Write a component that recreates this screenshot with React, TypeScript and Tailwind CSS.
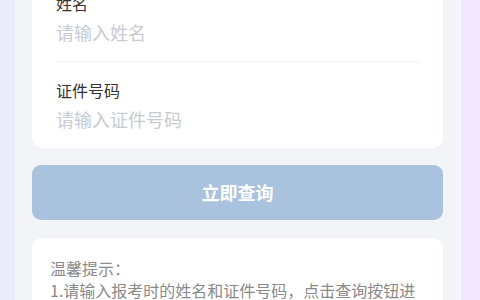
export default function App() {
  const font = { fontFamily: '"Noto Sans CJK SC", "Noto Sans", sans-serif' };

  return (
    <div
      className="h-[300px] w-[480px] overflow-hidden bg-gradient-to-r from-[#e9edfb] via-[#eef0fb] to-[#f1e6fc]"
      style={font}
    >
      <div className="ml-[15px] flex h-full w-[446px] flex-col bg-[#f3f4f7] px-[17px] border-r border-[#f8f7fc]">
        <div className="mt-[-25px] shrink-0 rounded-[10px] bg-white px-6">
          <div className="pt-4 pb-[14px] border-b border-[#f1f2f4]">
            <div className="h-6 text-[16px] leading-6 text-[#333]">姓名</div>
            <div className="mt-[2px] h-[30px] text-[18px] leading-[30px] text-[#c8cbd0]">
              请输入姓名
            </div>
          </div>
          <div className="pt-4 pb-[14px]">
            <div className="h-6 text-[16px] leading-6 text-[#333]">证件号码</div>
            <div className="mt-[2px] h-[30px] text-[18px] leading-[30px] text-[#c8cbd0]">
              请输入证件号码
            </div>
          </div>
        </div>

        <button className="mt-[17px] flex h-[55px] w-full shrink-0 items-center justify-center rounded-[9px] bg-[#a9c2dd] text-[18px] font-bold text-white">
          立即查询
        </button>

        <div className="mt-[18px] shrink-0 rounded-[10px] bg-white px-[18px] pt-[19px] pb-4 text-[16px] leading-[22px] text-[#8a8a8a]">
          <div>温馨提示：</div>
          <div>1.请输入报考时的姓名和证件号码，点击查询按钮进行查询</div>
        </div>
      </div>
    </div>
  );
}
